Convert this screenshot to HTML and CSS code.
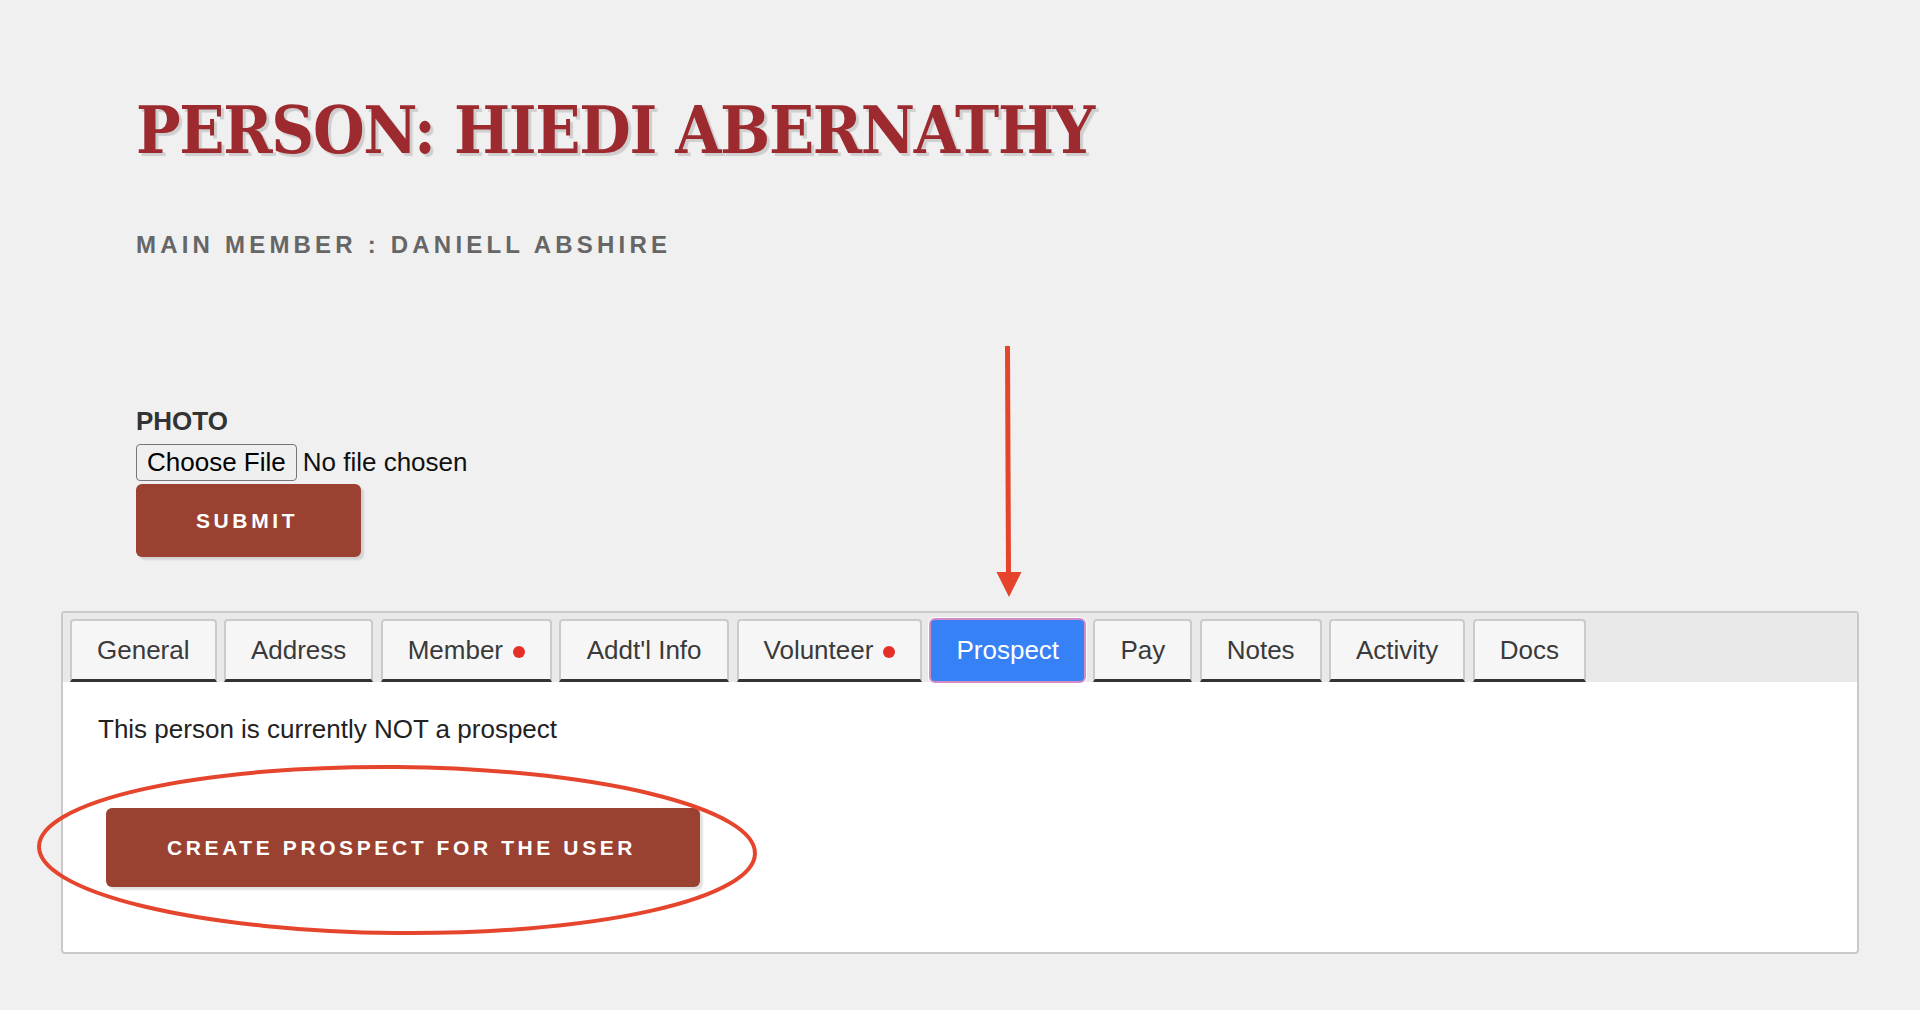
FILE: index.html
```html
<!DOCTYPE html>
<html lang="en">
<head>
<meta charset="utf-8">
<title>Person: Hiedi Abernathy</title>
<link rel="stylesheet" href="styles.css">
</head>
<body>
<main class="page">
  <header class="person-header">
    <h1 class="person-title">Person: Hiedi Abernathy</h1>
    <p class="main-member">Main Member : Daniell Abshire</p>
  </header>

  <form class="photo-form">
    <label class="photo-label" for="photo">Photo</label>
    <input class="photo-input" type="file" id="photo">
    <button class="btn btn-submit" type="button">Submit</button>
  </form>

  <section class="tabs-box">
    <nav class="tab-strip">
      <button class="tab" type="button">General</button>
      <button class="tab" type="button">Address</button>
      <button class="tab" type="button">Member<span class="dot"></span></button>
      <button class="tab tab-info" type="button">Addt'l Info</button>
      <button class="tab" type="button">Volunteer<span class="dot"></span></button>
      <button class="tab tab-active" type="button">Prospect</button>
      <button class="tab" type="button">Pay</button>
      <button class="tab" type="button">Notes</button>
      <button class="tab" type="button">Activity</button>
      <button class="tab" type="button">Docs</button>
    </nav>
    <div class="tab-panel">
      <p class="panel-text">This person is currently NOT a prospect</p>
      <button class="btn btn-create" type="button">Create Prospect for the user</button>
    </div>
  </section>
</main>

<svg class="annotations" width="1920" height="1010" viewBox="0 0 1920 1010">
  <line x1="1007.5" y1="346" x2="1008.5" y2="575" stroke="#e5432b" stroke-width="5"/>
  <polygon points="996.5,572 1021.5,572 1009,597" fill="#e5432b"/>
  <ellipse cx="397" cy="850" rx="358" ry="83" fill="none" stroke="#e5452c" stroke-width="4" transform="rotate(0.55 397 850)"/>
</svg>
</body>
</html>
```

FILE: styles.css
```css
html, body {
  margin: 0;
  padding: 0;
}

body {
  background: #f0f0f0;
  font-family: "Liberation Sans", Arial, sans-serif;
  color: #222;
  position: relative;
  min-height: 1010px;
}

.page {
  padding-bottom: 40px;
}

/* heading block */
.person-header {
  padding: 92px 0 0 136px;
}

.person-title {
  margin: 0;
  font-family: "DejaVu Serif Condensed", "DejaVu Serif", serif;
  font-weight: bold;
  font-size: 66px;
  line-height: 77px;
  letter-spacing: -1.3px;
  text-transform: uppercase;
  color: #9c2a2f;
  text-shadow: 3px 3px 1px rgba(0, 0, 0, 0.14);
}

.main-member {
  margin: 62px 0 0;
  font-size: 24px;
  line-height: 28px;
  font-weight: bold;
  letter-spacing: 4.2px;
  text-transform: uppercase;
  color: #666;
}

/* photo upload */
.photo-form {
  margin: 147px 0 0;
  padding-left: 136px;
}

.photo-label {
  display: block;
  font-size: 26px;
  line-height: 30px;
  font-weight: bold;
  text-transform: uppercase;
  color: #333;
}

.photo-input {
  display: block;
  margin-top: 8px;
  height: 37px;
  font-family: "Liberation Sans", Arial, sans-serif;
  font-size: 26px;
  color: #111;
}

.photo-input::file-selector-button {
  height: 37px;
  padding: 0 10px;
  margin-right: 6px;
  font: inherit;
  color: #000;
  background: #efefef;
  border: 1px solid #767676;
  border-radius: 4px;
}

/* rust buttons */
.btn {
  display: block;
  border: 0;
  border-radius: 6px;
  background: #9a4131;
  color: #fff;
  font-family: "Liberation Sans", Arial, sans-serif;
  font-weight: bold;
  font-size: 21px;
  line-height: 23px;
  letter-spacing: 3.6px;
  text-transform: uppercase;
  box-shadow: 3px 3px 2px rgba(0, 0, 0, 0.12);
}

.btn-submit {
  margin-top: 3px;
  padding: 25px 63px 25px 60px;
}

.btn-create {
  margin: 64px 0 0 8px;
  padding: 28px 64px 28px 61px;
}

/* tabbed box */
.tabs-box {
  margin: 54px 61px 0;
  border: 2px solid #c9c9c9;
  border-radius: 4px;
  background: #fff;
}

.tab-strip {
  display: flex;
  gap: 7.4px;
  padding: 6px 7px 0;
  background: #e9e9e9;
  border-radius: 3px 3px 0 0;
}

.tab {
  box-sizing: border-box;
  height: 63px;
  padding: 14px 25px;
  font-family: "Liberation Sans", Arial, sans-serif;
  font-size: 26px;
  line-height: 30px;
  color: #3a3a3a;
  background: #f6f6f6;
  border: 2px solid #cbcbcb;
  border-bottom: 3px solid #333;
  border-radius: 4px 4px 0 0;
  white-space: nowrap;
}

.tab-info {
  padding-left: 25.6px;
  padding-right: 25.6px;
}

.tab-active {
  height: 65px;
  margin: -1px 0;
  padding: 15px 25px 16px;
  color: #fff;
  background: #3781f6;
  border: 2px solid #d48cc4;
  border-radius: 6px;
  box-shadow: 0 0 0 1px #fff;
}

.dot {
  display: inline-block;
  width: 12px;
  height: 12px;
  margin-left: 9.7px;
  border-radius: 50%;
  background: #e5302a;
  vertical-align: 1.5px;
}

.tab-panel {
  padding: 32px 35px 65px;
}

.panel-text {
  margin: 0;
  font-size: 26px;
  line-height: 30px;
  color: #222;
}

/* callout marks drawn over the page */
.annotations {
  position: absolute;
  top: 0;
  left: 0;
  pointer-events: none;
}
```
